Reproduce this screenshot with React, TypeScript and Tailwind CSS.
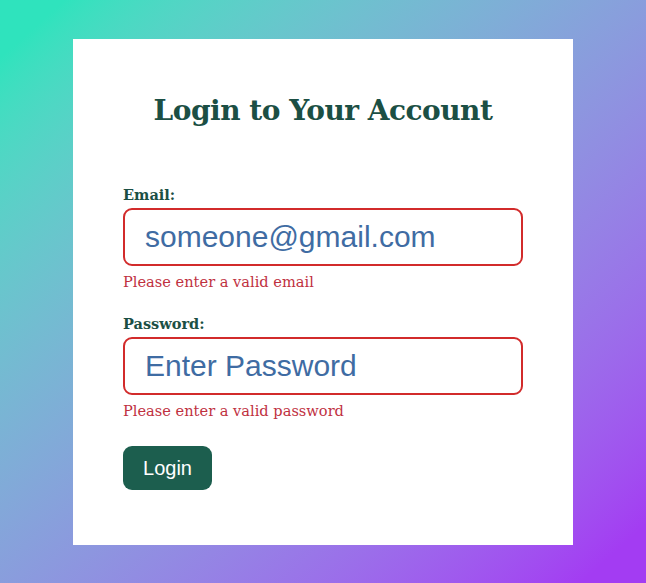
export default function App() {
  return (
    <div className="flex min-h-[583px] w-full items-center justify-center bg-gradient-to-br from-[#2fe3bd] from-[5%] to-[#a33cf2] to-[95%]">
      <form
        className="flex h-[506px] w-[500px] flex-col bg-white px-[50px] pt-[52px]"
        style={{ fontFamily: '"DejaVu Serif", serif' }}
      >
        <h1 className="text-center text-[28px] font-bold leading-[40px] tracking-[-0.5px] text-[#1b4f44]">
          Login to Your Account
        </h1>

        <label className="mt-[55px] text-[14.5px] font-bold leading-[18px] text-[#1b4f44]">Email:</label>
        <input
          className="mt-[4px] h-[58px] w-[400px] rounded-[9px] border-2 border-[#d22b2b] px-[20px] text-[30px] text-[#3f6ca3] outline-none placeholder:text-[#3f6ca3]"
          style={{ fontFamily: '"Liberation Sans", Arial, sans-serif' }}
          defaultValue="someone@gmail.com"
        />
        <p className="mt-[6px] text-[14.6px] font-light leading-[20px] text-[#c0313f]">Please enter a valid email</p>

        <label className="mt-[23px] text-[14.5px] font-bold leading-[18px] text-[#1b4f44]">Password:</label>
        <input
          type="password"
          className="mt-[4px] h-[58px] w-[400px] rounded-[9px] border-2 border-[#d22b2b] px-[20px] text-[30px] text-[#3f6ca3] outline-none placeholder:text-[#3f6ca3]"
          style={{ fontFamily: '"Liberation Sans", Arial, sans-serif' }}
          placeholder="Enter Password"
        />
        <p className="mt-[6px] text-[14.6px] font-light leading-[20px] text-[#c0313f]">Please enter a valid password</p>

        <button
          type="button"
          className="mt-[25px] h-[44px] w-[89px] rounded-[9px] bg-[#1c5e4e] text-[20px] text-white"
          style={{ fontFamily: '"Liberation Sans", Arial, sans-serif' }}
        >
          Login
        </button>
      </form>
    </div>
  );
}
